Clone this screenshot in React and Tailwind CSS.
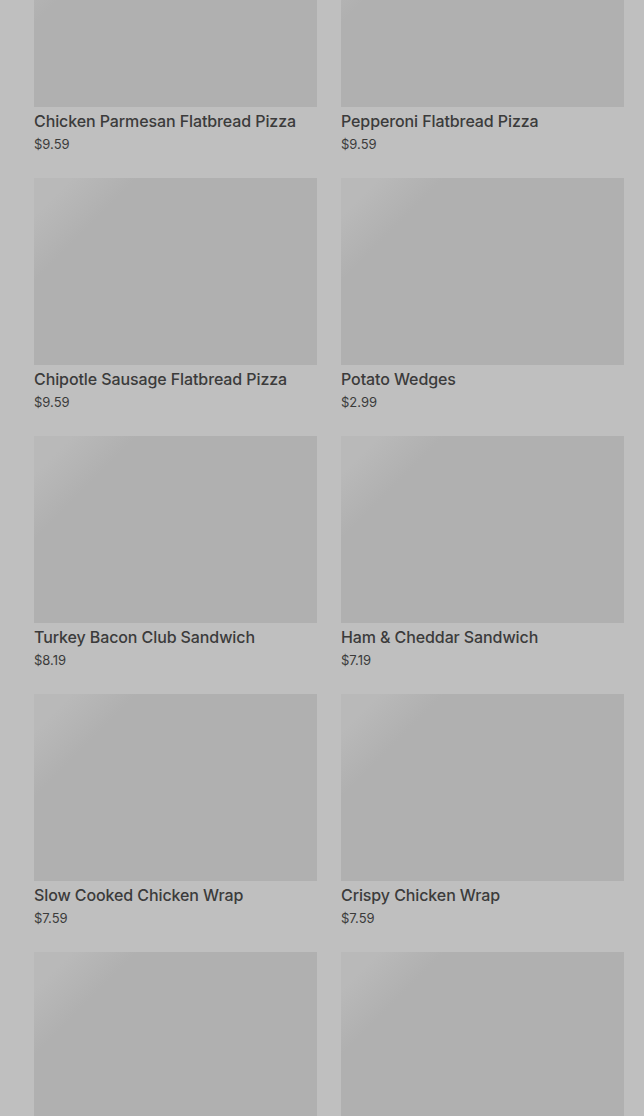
import React from 'react';

const items = [
  { name: 'Chicken Parmesan Flatbread Pizza', price: '$9.59' },
  { name: 'Pepperoni Flatbread Pizza', price: '$9.59' },
  { name: 'Chipotle Sausage Flatbread Pizza', price: '$9.59' },
  { name: 'Potato Wedges', price: '$2.99' },
  { name: 'Turkey Bacon Club Sandwich', price: '$8.19' },
  { name: 'Ham & Cheddar Sandwich', price: '$7.19' },
  { name: 'Slow Cooked Chicken Wrap', price: '$7.59' },
  { name: 'Crispy Chicken Wrap', price: '$7.59' },
  { name: 'Chicken Caesar Wrap', price: '$7.59' },
  { name: 'Turkey Pesto Wrap', price: '$7.59' },
];

export default function App() {
  return (
    <div className="min-h-screen overflow-hidden bg-[#bfbfbf] font-['Inter',sans-serif]">
      <div className="-mt-[80px] grid grid-cols-2 gap-x-[24px] gap-y-[24px] pb-6 pl-[34px] pr-[20px]">
        {items.map((item) => (
          <ProductCard key={item.name} item={item} />
        ))}
      </div>
    </div>
  );
}

// Card with placeholder image (still loading)
function ProductCard({ item }) {
  return (
    <div className="flex flex-col">
      <div className="h-[187px] w-full bg-[linear-gradient(135deg,#b9b9b9_0%,#b9b9b9_8%,#b0b0b0_22%,#b0b0b0_100%)]" />
      <p className="mt-[2px] truncate text-[16px] leading-[24px] font-medium tracking-[-0.1px] text-[#3b3b3b]">{item.name}</p>
      <p className="mt-[1px] text-[13px] leading-[20px] text-[#3b3b3b]">{item.price}</p>
    </div>
  );
}
